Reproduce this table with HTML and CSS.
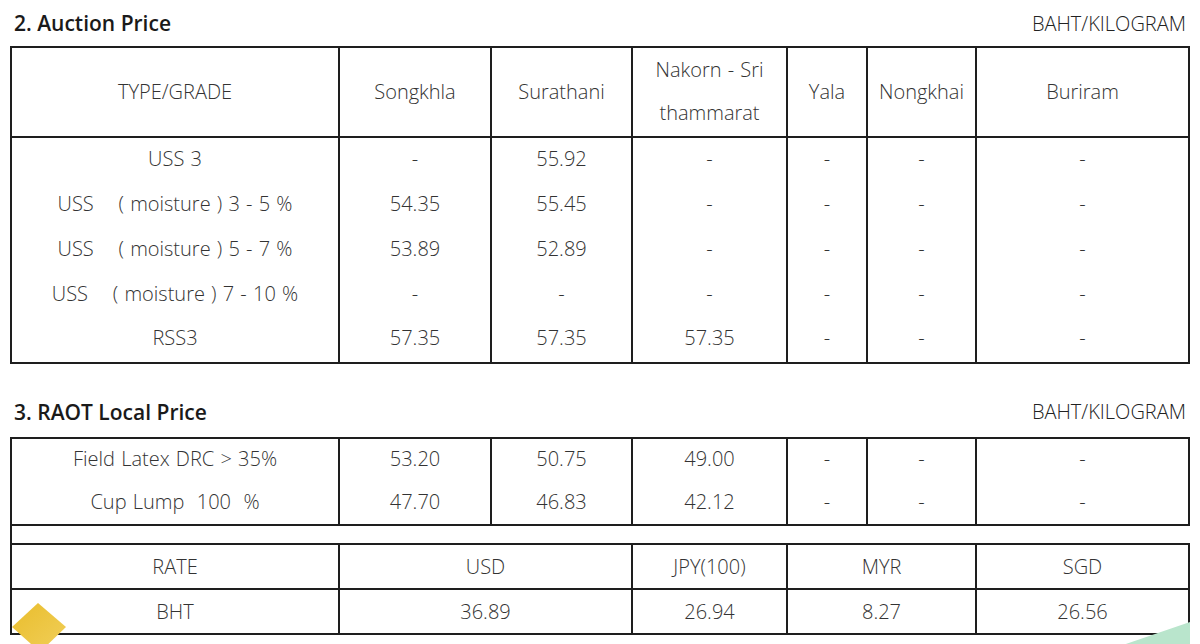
FILE: index.html
```html
<!DOCTYPE html>
<html>
<head>
<meta charset="utf-8">
<link rel="stylesheet" href="styles.css">
</head>
<body>
<div class="page">
  <div class="sec-head sec-head-1">
    <span class="sec-title">2. Auction Price</span>
    <span class="unit">BAHT/KILOGRAM</span>
  </div>
  <table class="grid">
    <colgroup>
      <col class="c1"><col class="c2"><col class="c3"><col class="c4"><col class="c5"><col class="c6"><col class="c7">
    </colgroup>
    <tr class="head">
      <td>TYPE/GRADE</td><td>Songkhla</td><td>Surathani</td><td>Nakorn - Sri<br>thammarat</td><td>Yala</td><td>Nongkhai</td><td>Buriram</td>
    </tr>
    <tr class="first">
      <td>USS 3</td><td>-</td><td>55.92</td><td>-</td><td>-</td><td>-</td><td>-</td>
    </tr>
    <tr class="mid">
      <td>USS&nbsp;&nbsp;&nbsp; ( moisture ) 3 - 5 %</td><td>54.35</td><td>55.45</td><td>-</td><td>-</td><td>-</td><td>-</td>
    </tr>
    <tr class="mid">
      <td>USS&nbsp;&nbsp;&nbsp; ( moisture ) 5 - 7 %</td><td>53.89</td><td>52.89</td><td>-</td><td>-</td><td>-</td><td>-</td>
    </tr>
    <tr class="mid">
      <td>USS&nbsp;&nbsp;&nbsp; ( moisture ) 7 - 10 %</td><td>-</td><td>-</td><td>-</td><td>-</td><td>-</td><td>-</td>
    </tr>
    <tr class="last">
      <td>RSS3</td><td>57.35</td><td>57.35</td><td>57.35</td><td>-</td><td>-</td><td>-</td>
    </tr>
  </table>

  <div class="sec-head sec-head-2">
    <span class="sec-title">3. RAOT Local Price</span>
    <span class="unit">BAHT/KILOGRAM</span>
  </div>
  <table class="grid grid2">
    <colgroup>
      <col class="c1"><col class="c2"><col class="c3"><col class="c4"><col class="c5"><col class="c6"><col class="c7">
    </colgroup>
    <tr class="lfirst">
      <td>Field Latex DRC &gt; 35%</td><td>53.20</td><td>50.75</td><td>49.00</td><td>-</td><td>-</td><td>-</td>
    </tr>
    <tr class="llast">
      <td>Cup Lump&nbsp; 100&nbsp; %</td><td>47.70</td><td>46.83</td><td>42.12</td><td>-</td><td>-</td><td>-</td>
    </tr>
    <tr class="spacer">
      <td colspan="7"></td>
    </tr>
    <tr class="rate">
      <td>RATE</td><td colspan="2">USD</td><td>JPY(100)</td><td colspan="2">MYR</td><td>SGD</td>
    </tr>
    <tr class="rate">
      <td>BHT</td><td colspan="2">36.89</td><td>26.94</td><td colspan="2">8.27</td><td>26.56</td>
    </tr>
  </table>

  <svg class="deco-yellow" width="70" height="50" viewBox="0 0 70 50">
    <defs>
      <linearGradient id="gy" x1="0" y1="0" x2="1" y2="1">
        <stop offset="0" stop-color="#e9bd2c"/>
        <stop offset="1" stop-color="#f1cf5a"/>
      </linearGradient>
    </defs>
    <polygon points="38,3 66,27 40,52 12,27" fill="url(#gy)"/>
  </svg>
  <svg class="deco-green" width="80" height="26" viewBox="0 0 80 26">
    <polygon points="8,26 78,2 78,26" fill="#b9e5cc"/>
  </svg>
</div>
</body>
</html>
```
FILE: styles.css
```css
html, body {
  margin: 0;
  padding: 0;
  background: #ffffff;
}
.page {
  position: relative;
  width: 1200px;
  height: 644px;
  overflow: hidden;
  font-family: "Open Sans", "Liberation Sans", sans-serif;
  color: #333;
}
.sec-head {
  display: flex;
  justify-content: space-between;
  align-items: center;
  padding: 0 14px 0 14px;
}
.sec-head-1 {
  height: 46px;
}
.sec-head-2 {
  height: 73px;
  align-items: flex-end;
}
.sec-head-2 span {
  line-height: 50px;
}
.sec-title {
  font-weight: 600;
  font-size: 21px;
  color: #1a1a1a;
}
.unit {
  font-size: 20px;
  font-weight: 300;
  color: #222;
}
.grid {
  margin-left: 10px;
  width: 1178px;
  border-collapse: collapse;
  table-layout: fixed;
  font-size: 20px;
  font-weight: 300;
  word-spacing: 1px;
}
.c1 { width: 328px; }
.c2 { width: 152px; }
.c3 { width: 141px; }
.c4 { width: 155px; }
.c5 { width: 80px; }
.c6 { width: 109px; }
.c7 { width: 213px; }
.grid td {
  padding: 0;
  text-align: center;
  line-height: 45px;
  height: 45px;
  border-left: 2px solid #1e1e1e;
  border-right: 2px solid #1e1e1e;
  white-space: nowrap;
}
.grid .head td {
  border-top: 2px solid #1e1e1e;
  border-bottom: 2px solid #1e1e1e;
  height: 86px;
  padding-bottom: 2px;
  line-height: 43px;
}
.grid .first td {
  line-height: 41px;
  height: 41px;
  padding-bottom: 2px;
}
.grid .last td {
  border-bottom: 2px solid #1e1e1e;
  height: 43px;
  padding-bottom: 3px;
  line-height: 42px;
}
.grid .lfirst td {
  border-top: 2px solid #1e1e1e;
  height: 40px;
  padding-bottom: 1px;
  line-height: 40px;
}
.grid .llast td {
  border-bottom: 2px solid #1e1e1e;
  height: 44px;
  line-height: 44px;
}
.grid .spacer td {
  height: 17px;
  line-height: 17px;
  border-right: none;
  border-bottom: 2px solid #1e1e1e;
}
.grid .rate td {
  border-bottom: 2px solid #1e1e1e;
  height: 43px;
  line-height: 43px;
}
.deco-yellow {
  position: absolute;
  left: 0;
  top: 600px;
}
.deco-green {
  position: absolute;
  left: 1112px;
  top: 620px;
}
```
